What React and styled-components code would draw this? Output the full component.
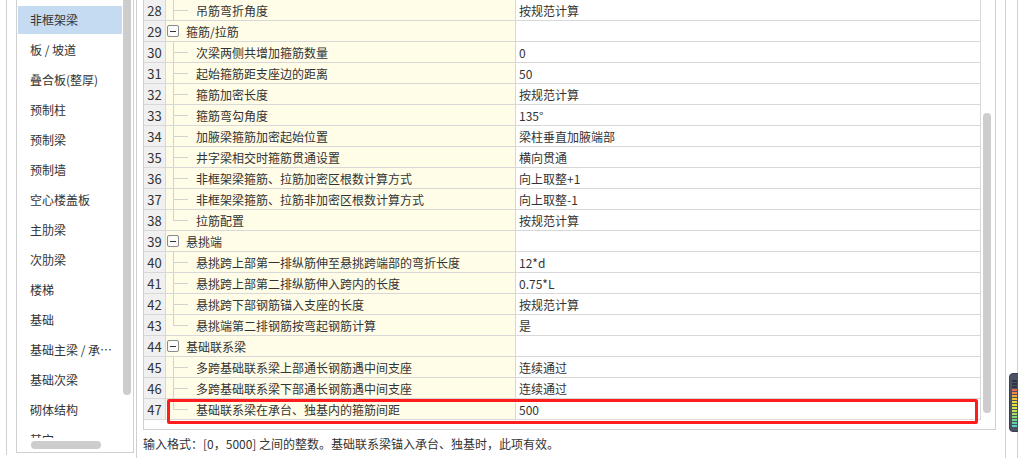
import React from 'react';
import styled, { createGlobalStyle } from 'styled-components';

const GlobalStyle = createGlobalStyle`
  html, body {
    margin: 0;
    padding: 0;
    background: #fff;
  }
  body {
    font-family: "Noto Sans CJK SC", "Noto Sans", sans-serif;
    font-size: 12px;
    color: #333;
    overflow: hidden;
  }
  * {
    box-sizing: border-box;
  }
`;

const Page = styled.div`
  position: relative;
  display: flex;
  width: 1018px;
  height: 458px;
  overflow: hidden;
`;

const LeftFrame = styled.div`
  margin-left: 6px;
  border-left: 1px solid #d0d0d0;
  padding-left: 9px;
  height: 455px;
`;

const SidePanel = styled.div`
  display: flex;
  flex-direction: column;
  width: 118px;
  height: 453px;
  border: 1px solid #d0d0d0;
  border-top: none;
`;

const SideView = styled.div`
  flex: 1;
  display: flex;
  overflow: hidden;
`;

const SideList = styled.div`
  width: 105px;
  padding-top: 5px;
  display: flex;
  flex-direction: column;
`;

const SideItem = styled.div`
  flex: none;
  height: 28px;
  margin: 1px 0 1px 1px;
  padding-left: 12px;
  line-height: 28px;
  white-space: nowrap;
  overflow: hidden;
  text-overflow: ellipsis;
  color: #333;
  background: ${(p) => (p.$active ? '#c5dbf1' : 'transparent')};
`;

const VTrack = styled.div`
  width: 11px;
  padding-left: 1px;
`;

const Thumb = styled.div`
  width: 8px;
  height: ${(p) => p.$h}px;
  margin-top: ${(p) => p.$top || 0}px;
  background: #cdcdcd;
  border-radius: ${(p) => (p.$top ? '4px' : '0 0 4px 4px')};
`;

const HTrack = styled.div`
  height: 14px;
  padding: 3px 0 0 14px;
`;

const HThumb = styled.div`
  width: 70px;
  height: 8px;
  background: #cdcdcd;
  border-radius: 4px;
`;

const RightPane = styled.div`
  flex: none;
  width: 870px;
  margin-left: 2px;
  border-left: 1px solid #d0d0d0;
  border-right: 1px solid #d0d0d0;
  padding: 0 9px 0 6px;
  display: flex;
  flex-direction: column;
`;

const EdgeStrip = styled.div`
  width: 12px;
  border-right: 1px solid #d0d0d0;
`;

const Table = styled.div`
  position: relative;
  display: flex;
  height: 430px;
  border: 1px solid #d0d0d0;
  border-top: none;
`;

const Grid = styled.div`
  width: 837px;
  display: flex;
  flex-direction: column;
`;

const Row = styled.div`
  display: grid;
  grid-template-columns: 22px 350px 465px;
  height: 21px;
  flex: none;
`;

const Cell = styled.div`
  border-right: 1px solid #d8d8d8;
  border-bottom: 1px solid #d8d8d8;
  height: 21px;
  line-height: 21px;
  white-space: nowrap;
  overflow: hidden;
`;

const NumCell = styled(Cell)`
  background: #f0f0f0;
  text-align: center;
  font-size: 13px;
  color: #333;
`;

const NameCell = styled(Cell)`
  position: relative;
  background: #fffde8;
  display: flex;
  align-items: center;
  padding-left: ${(p) => (p.$group ? 1 : 30)}px;
  gap: 7px;

  ${(p) =>
    !p.$group &&
    `
    &::before {
      content: '';
      position: absolute;
      left: 7px;
      top: 0;
      width: 1px;
      height: ${p.$last ? '10px' : '20px'};
      background: #d2d2d2;
    }
    &::after {
      content: '';
      position: absolute;
      left: 7px;
      top: 10px;
      width: 15px;
      height: 1px;
      background: #d2d2d2;
    }
  `}
`;

const ValueCell = styled(Cell)`
  background: #fff;
  padding-left: 3px;
`;

const Toggle = styled.span`
  flex: none;
  width: 12px;
  height: 12px;
  border: 1px solid #8a8a8a;
  border-radius: 2px;
  background: #fbfbfb;
  display: flex;
  align-items: center;
  justify-content: center;

  &::before {
    content: '';
    width: 6px;
    height: 1px;
    background: #333;
  }
`;

const TableTrack = styled.div`
  width: 14px;
  padding-left: 2px;
`;

const Highlight = styled.div`
  position: absolute;
  left: 23px;
  top: 399px;
  width: 811px;
  height: 25px;
  border: 3px solid #ff1c1c;
  border-radius: 2px;
  pointer-events: none;
`;

const Hint = styled.div`
  height: 28px;
  line-height: 28px;
  color: #333;
  white-space: nowrap;
`;

const Meter = styled.div`
  position: absolute;
  left: 1009px;
  top: 373px;
  width: 16px;
  height: 59px;
  background: #4b5263;
  border: 1px solid #3a3f4c;
  border-radius: 4px;
  padding: 6px 0 0 2px;
  display: flex;
  flex-direction: column;
  gap: 1px;
`;

const Bar = styled.div`
  width: 5px;
  height: 2px;
  background: ${(p) => p.$c};
`;

const sideItems = [
  '非框架梁', '板 / 坡道', '叠合板(整厚)', '预制柱', '预制梁', '预制墙', '空心楼盖板',
  '主肋梁', '次肋梁', '楼梯', '基础', '基础主梁 / 承台梁', '基础次梁', '砌体结构', '其它',
];

const rows = [
  { n: 28, name: '吊筋弯折角度', value: '按规范计算' },
  { n: 29, name: '箍筋/拉筋', group: true },
  { n: 30, name: '次梁两侧共增加箍筋数量', value: '0' },
  { n: 31, name: '起始箍筋距支座边的距离', value: '50' },
  { n: 32, name: '箍筋加密长度', value: '按规范计算' },
  { n: 33, name: '箍筋弯勾角度', value: '135°' },
  { n: 34, name: '加腋梁箍筋加密起始位置', value: '梁柱垂直加腋端部' },
  { n: 35, name: '井字梁相交时箍筋贯通设置', value: '横向贯通' },
  { n: 36, name: '非框架梁箍筋、拉筋加密区根数计算方式', value: '向上取整+1' },
  { n: 37, name: '非框架梁箍筋、拉筋非加密区根数计算方式', value: '向上取整-1' },
  { n: 38, name: '拉筋配置', value: '按规范计算', last: true },
  { n: 39, name: '悬挑端', group: true },
  { n: 40, name: '悬挑跨上部第一排纵筋伸至悬挑跨端部的弯折长度', value: '12*d' },
  { n: 41, name: '悬挑跨上部第二排纵筋伸入跨内的长度', value: '0.75*L' },
  { n: 42, name: '悬挑跨下部钢筋锚入支座的长度', value: '按规范计算' },
  { n: 43, name: '悬挑端第二排钢筋按弯起钢筋计算', value: '是', last: true },
  { n: 44, name: '基础联系梁', group: true },
  { n: 45, name: '多跨基础联系梁上部通长钢筋遇中间支座', value: '连续通过' },
  { n: 46, name: '多跨基础联系梁下部通长钢筋遇中间支座', value: '连续通过' },
  { n: 47, name: '基础联系梁在承台、独基内的箍筋间距', value: '500', last: true },
];

const meterColors = [
  '#2f333d', '#2f333d', '#2f333d', '#e86a4a', '#ee8a45', '#f0a840', '#f0c83e', '#ecd83e',
  '#e6e040', '#d8e448', '#c2e454', '#a6e060', '#8ad872', '#74d48a', '#62d2a4', '#58d0bc',
];

export default function App() {
  return (
    <>
      <GlobalStyle />
      <Page>
        <LeftFrame>
          <SidePanel>
            <SideView>
              <SideList>
                {sideItems.map((t, i) => (
                  <SideItem key={t} $active={i === 0}>
                    {t}
                  </SideItem>
                ))}
              </SideList>
              <VTrack>
                <Thumb $h={395} />
              </VTrack>
            </SideView>
            <HTrack>
              <HThumb />
            </HTrack>
          </SidePanel>
        </LeftFrame>

        <RightPane>
          <Table>
            <Grid>
              {rows.map((r) => (
                <Row key={r.n}>
                  <NumCell>{r.n}</NumCell>
                  <NameCell $group={r.group} $last={r.last}>
                    {r.group && <Toggle />}
                    {r.name}
                  </NameCell>
                  <ValueCell>{r.value || ''}</ValueCell>
                </Row>
              ))}
            </Grid>
            <TableTrack>
              <Thumb $top={113} $h={300} />
            </TableTrack>
            <Highlight />
          </Table>
          <Hint>输入格式：[0，5000] 之间的整数。基础联系梁锚入承台、独基时，此项有效。</Hint>
        </RightPane>

        <EdgeStrip />

        <Meter>
          {meterColors.map((c, i) => (
            <Bar key={i} $c={c} />
          ))}
        </Meter>
      </Page>
    </>
  );
}
